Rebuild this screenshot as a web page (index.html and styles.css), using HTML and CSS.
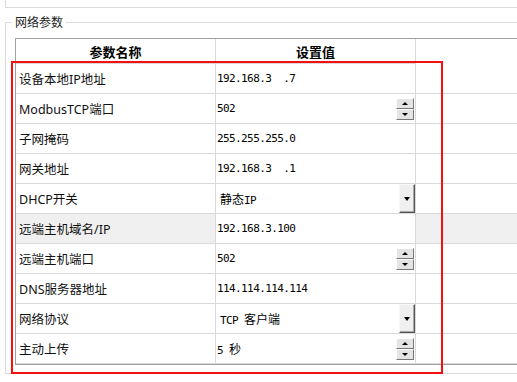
FILE: index.html
```html
<!DOCTYPE html>
<html lang="zh-CN">
<head>
    <meta charset="UTF-8">
    <title>网络参数</title>
    <link rel="stylesheet" href="styles.css">
</head>
<body>
    <div class="top-box"></div>

    <fieldset class="group">
        <legend>网络参数</legend>
        <div class="grid">
            <div class="row head">
                <div class="cell c1">参数名称</div>
                <div class="cell c2">设置值</div>
                <div class="cell c3"></div>
            </div>
            <div class="row">
                <div class="cell c1">设备本地IP地址</div>
                <div class="cell c2"><span class="val">192.168.3  .7</span></div>
                <div class="cell c3"></div>
            </div>
            <div class="row">
                <div class="cell c1">ModbusTCP端口</div>
                <div class="cell c2">
                    <span class="val">502</span>
                    <div class="spin"><div class="spin-btn up"></div><div class="spin-btn down"></div></div>
                </div>
                <div class="cell c3"></div>
            </div>
            <div class="row">
                <div class="cell c1">子网掩码</div>
                <div class="cell c2"><span class="val">255.255.255.0</span></div>
                <div class="cell c3"></div>
            </div>
            <div class="row">
                <div class="cell c1">网关地址</div>
                <div class="cell c2"><span class="val">192.168.3  .1</span></div>
                <div class="cell c3"></div>
            </div>
            <div class="row">
                <div class="cell c1">DHCP开关</div>
                <div class="cell c2 combo">
                    <span class="val"><span class="cjk">静态</span>IP</span>
                    <div class="drop-btn"></div>
                </div>
                <div class="cell c3"></div>
            </div>
            <div class="row selected">
                <div class="cell c1">远端主机域名/IP</div>
                <div class="cell c2"><span class="val">192.168.3.100</span></div>
                <div class="cell c3"></div>
            </div>
            <div class="row">
                <div class="cell c1">远端主机端口</div>
                <div class="cell c2">
                    <span class="val">502</span>
                    <div class="spin"><div class="spin-btn up"></div><div class="spin-btn down"></div></div>
                </div>
                <div class="cell c3"></div>
            </div>
            <div class="row">
                <div class="cell c1">DNS服务器地址</div>
                <div class="cell c2"><span class="val">114.114.114.114</span></div>
                <div class="cell c3"></div>
            </div>
            <div class="row">
                <div class="cell c1">网络协议</div>
                <div class="cell c2 combo">
                    <span class="val">TCP <span class="cjk">客户端</span></span>
                    <div class="drop-btn"></div>
                </div>
                <div class="cell c3"></div>
            </div>
            <div class="row">
                <div class="cell c1">主动上传</div>
                <div class="cell c2">
                    <span class="val">5 <span class="cjk">秒</span></span>
                    <div class="spin"><div class="spin-btn up"></div><div class="spin-btn down"></div></div>
                </div>
                <div class="cell c3"></div>
            </div>
        </div>
    </fieldset>

    <div class="mark"></div>
</body>
</html>
```

FILE: styles.css
```css
body {
    margin: 0;
    background: #fff;
    font-family: "Noto Sans", "Noto Sans CJK SC", sans-serif;
    color: #111;
    overflow: hidden;
    position: relative;
    height: 382px;
}

.top-box {
    height: 7px;
    margin-left: 5px;
    border-left: 1px solid #dcdcdc;
    border-bottom: 1px solid #dcdcdc;
}

.group {
    margin: 6px 0 0 5px;
    padding: 8px 0 8px 9px;
    border: 1px solid #dcdcdc;
    border-right: none;
    min-width: 0;
}

.group legend {
    font-family: "Noto Sans CJK SC", sans-serif;
    font-size: 12px;
    line-height: 16px;
    height: 16px;
    padding: 0 3px;
    margin-left: -3px;
    color: #222;
}

.grid {
    border-top: 1px solid #a0a0a0;
    border-left: 1px solid #a0a0a0;
    border-bottom: 1px solid #a0a0a0;
}

.row {
    display: flex;
    height: 30px;
}

.cell {
    box-sizing: border-box;
    height: 30px;
    border-bottom: 1px solid #d9d9d9;
    display: flex;
    align-items: center;
}

.c1 {
    width: 200px;
    padding-left: 3px;
    border-right: 1px solid #d9d9d9;
    font-size: 12.5px;
}

.c2 {
    width: 200px;
    padding-left: 1px;
    border-right: 1px solid #d9d9d9;
    font-family: "DejaVu Sans Mono", monospace;
    font-size: 11px;
    letter-spacing: -0.6px;
    color: #000;
}

.c3 {
    flex: 1;
}

.val {
    flex: 1;
    white-space: pre;
}

.cjk {
    font-family: "Noto Sans CJK SC", sans-serif;
    font-size: 12px;
    letter-spacing: 0;
}

.combo .val {
    padding-left: 3px;
}

.head {
    height: 25px;
}

.head .cell {
    height: 25px;
    justify-content: center;
    padding: 0;
    font-family: "Noto Sans CJK SC", sans-serif;
    font-size: 13px;
    font-weight: bold;
    letter-spacing: 0;
    color: #000;
}

.head .c3 {
    border-bottom-color: transparent;
}

.selected .c1,
.selected .c3 {
    background: #f0f0f0;
}

/* spinner (up/down) */
.spin {
    display: flex;
    flex-direction: column;
    width: 18px;
    margin-right: 1px;
}

.spin-btn {
    box-sizing: border-box;
    height: 11px;
    background: #e4e4e4;
    border: 1px solid;
    border-color: #fff #777 #777 #fff;
    display: flex;
    align-items: center;
    justify-content: center;
}

.spin-btn::after {
    content: "";
    border-left: 3px solid transparent;
    border-right: 3px solid transparent;
}

.spin-btn.up::after {
    border-bottom: 3px solid #000;
}

.spin-btn.down::after {
    border-top: 3px solid #000;
}

/* combo drop button */
.drop-btn {
    box-sizing: border-box;
    width: 16px;
    height: 29px;
    align-self: flex-start;
    background: #efefef;
    border: 1px solid;
    border-color: #f8f8f8 #555 #555 #f8f8f8;
    box-shadow: inset -1px -1px #a8a8a8;
    display: flex;
    align-items: center;
    justify-content: center;
}

.drop-btn::after {
    content: "";
    border-left: 3.5px solid transparent;
    border-right: 3.5px solid transparent;
    border-top: 4px solid #000;
}

/* red highlight frame */
.mark {
    position: absolute;
    left: 11px;
    top: 61px;
    width: 432px;
    height: 313px;
    box-sizing: border-box;
    border: 2px solid #f21010;
}
```
